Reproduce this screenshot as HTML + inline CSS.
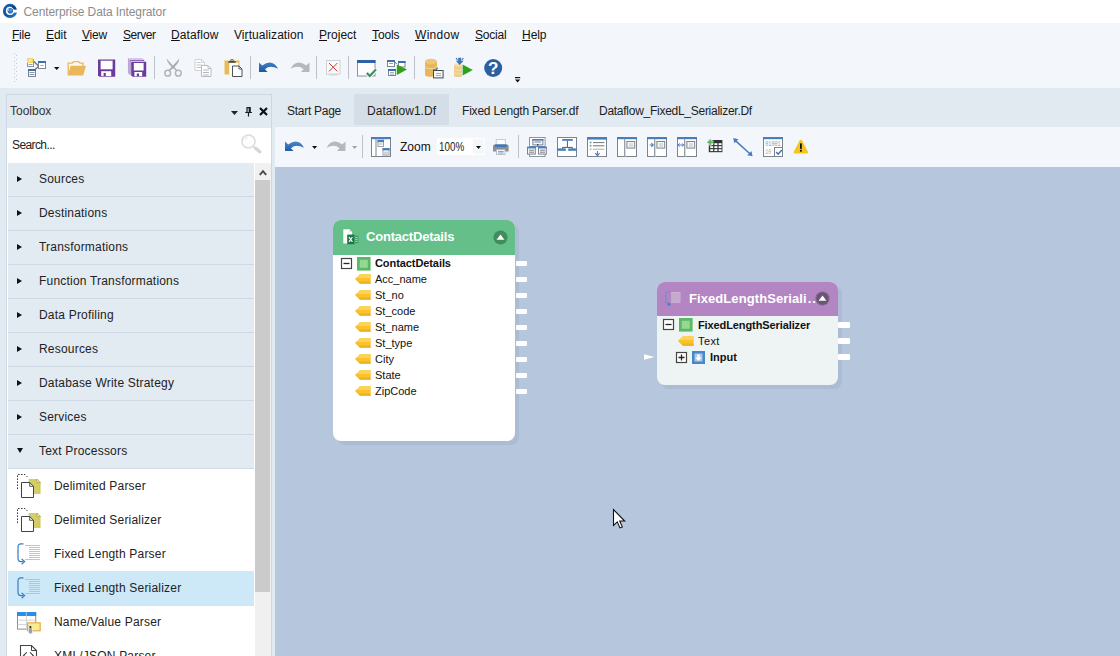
<!DOCTYPE html>
<html><head><meta charset="utf-8"><title>Centerprise Data Integrator</title>
<style>
*{box-sizing:border-box;margin:0;padding:0}
html,body{width:1120px;height:656px;overflow:hidden;background:#e1e9f1;font-family:"Liberation Sans",sans-serif;font-size:12px;color:#1e1e1e}
.abs{position:absolute}
svg{overflow:visible}
span{white-space:nowrap}
#title{left:0;top:0;width:1120px;height:23px;background:#fff}
#title .t{left:23.5px;top:5px;color:#8c8c8c;font-size:12px}
#menu{left:0;top:23px;width:1120px;height:24px;background:#f3f6fa}
#menu span{position:absolute;top:5px;font-size:12px;color:#111}
#menu u{text-decoration:underline;text-underline-offset:1px}
#tbar{left:0;top:47px;width:1120px;height:41px;background:#f3f6fa}
.sep{position:absolute;width:1px;background:#bcc1ca}
#toolbox{left:6px;top:94px;width:266px;height:570px;border:1px solid #ced8e5;background:#e1e9f1}
#tbx-t{left:10px;top:104px;font-size:12px;color:#333}
#search{left:7px;top:128px;width:264px;height:35px;background:#fff}
#search span{left:5px;top:10px;font-size:12px;color:#222}
.cat{position:absolute;left:8px;width:246px;height:34px;background:#e2eaf2;border-bottom:1px solid #cfd8e5}
.cat span{position:absolute;left:31px;top:9px;font-size:12px;color:#222;letter-spacing:0.2px}
.cat i{position:absolute;left:9px;top:12.6px;width:0;height:0;border-left:5.4px solid #111;border-top:3.9px solid transparent;border-bottom:3.9px solid transparent}
.cat i.open{left:9px;top:13px;border-left:3.7px solid transparent;border-right:3.7px solid transparent;border-top:5.4px solid #111;border-bottom:0}
.item{position:absolute;left:8px;width:247px;height:34px;background:#fff}
.item.sel{background:#cde8f7;width:246px;height:35.6px}
.item span{position:absolute;left:46px;top:10px;font-size:12px;color:#222;letter-spacing:0.2px}
#sbar{left:255px;top:163px;width:16px;height:493px;background:#f0f0f0}
#sthumb{left:255px;top:180px;width:15px;height:411.5px;background:#cbcbcb}
#tabs span{position:absolute;top:104px;font-size:12px;color:#1e1e1e}
#tabact{left:354px;top:94px;width:95px;height:31px;background:#d5dde7}
#tb2{left:275px;top:127px;width:845px;height:40px;background:#f3f6fa}
#canvas{left:275px;top:167px;width:845px;height:489px;background:#b6c7dd;overflow:hidden}
.node{position:absolute;border-radius:8px;}
.nshadow{position:absolute;border-radius:8px;background:#abbcd4}
.nhead{position:absolute;left:0;top:0;right:0;border-radius:8px 8px 0 0}
.ntitle{position:absolute;color:#fff;font-weight:bold;font-size:13px}
.row{position:absolute;font-size:11px;color:#111}
.row.b{font-weight:bold}
.port{position:absolute;width:11px;height:5px;background:#fff;border-radius:1px}
</style></head><body>
<div id="title" class="abs"><span class="abs t" style="letter-spacing:-0.107px">Centerprise Data Integrator</span>
<svg class="abs" style="left:0px;top:0px" width="20" height="22" viewBox="0 0 20 22" ><defs><linearGradient id="lg" x1="0" y1="0" x2="1" y2="1"><stop offset="0" stop-color="#1565b2"/><stop offset="0.5" stop-color="#0c4f9e"/><stop offset="1" stop-color="#1d7cc4"/></linearGradient></defs><circle cx="10" cy="10.9" r="5.6" fill="none" stroke="url(#lg)" stroke-width="3"/><path d="M12.4 5.2A6.4 6.4 0 0 1 16.6 9.2L14 9.8Q13 7.6 11.4 7z" fill="#0b3f8a"/><rect x="12.8" y="9.7" width="5.4" height="2.9" fill="#fff"/><circle cx="10.3" cy="10.7" r="2.8" fill="#2a6fc0"/><circle cx="10.9" cy="10.2" r="1.2" fill="#4a9be0"/><circle cx="8.6" cy="10" r="0.9" fill="#9fb6d4"/></svg>
</div>
<div id="menu" class="abs"><span style="left:12px;letter-spacing:-0.225px"><u>F</u>ile</span><span style="left:46px;letter-spacing:-0.05px"><u>E</u>dit</span><span style="left:82px;letter-spacing:-0.2px"><u>V</u>iew</span><span style="left:123px;letter-spacing:-0.483px"><u>S</u>erver</span><span style="left:171px;letter-spacing:0.1px"><u>D</u>ataflow</span><span style="left:234px;letter-spacing:0.071px">Vi<u>r</u>tualization</span><span style="left:319px;letter-spacing:0.014px"><u>P</u>roject</span><span style="left:372px;letter-spacing:-0.1px"><u>T</u>ools</span><span style="left:415px;letter-spacing:0.3px"><u>W</u>indow</span><span style="left:475px;letter-spacing:-0.2px"><u>S</u>ocial</span><span style="left:522px;letter-spacing:-0.05px"><u>H</u>elp</span></div>
<div id="tbar" class="abs"></div>
<svg class="abs" style="left:14px;top:53px" width="4" height="30" viewBox="0 0 4 30" ><rect x="0" y="0" width="1" height="1" fill="#c3c8d0"/><rect x="2" y="2" width="1" height="1" fill="#c3c8d0"/><rect x="0" y="4" width="1" height="1" fill="#c3c8d0"/><rect x="2" y="6" width="1" height="1" fill="#c3c8d0"/><rect x="0" y="8" width="1" height="1" fill="#c3c8d0"/><rect x="2" y="10" width="1" height="1" fill="#c3c8d0"/><rect x="0" y="12" width="1" height="1" fill="#c3c8d0"/><rect x="2" y="14" width="1" height="1" fill="#c3c8d0"/><rect x="0" y="16" width="1" height="1" fill="#c3c8d0"/><rect x="2" y="18" width="1" height="1" fill="#c3c8d0"/><rect x="0" y="20" width="1" height="1" fill="#c3c8d0"/><rect x="2" y="22" width="1" height="1" fill="#c3c8d0"/><rect x="0" y="24" width="1" height="1" fill="#c3c8d0"/><rect x="2" y="26" width="1" height="1" fill="#c3c8d0"/><rect x="0" y="28" width="1" height="1" fill="#c3c8d0"/></svg>
<div class="sep" style="left:154px;top:56px;height:23px"></div>
<div class="sep" style="left:250px;top:56px;height:23px"></div>
<div class="sep" style="left:316px;top:56px;height:23px"></div>
<div class="sep" style="left:348px;top:56px;height:23px"></div>
<div class="sep" style="left:414px;top:56px;height:23px"></div>
<svg class="abs" style="left:27px;top:58px" width="19" height="19" viewBox="0 0 19 19"><path d="M7 3.5L11.5 8M8 11.5L11.5 8.5" stroke="#6b7480" stroke-width="1.2" fill="none"/><rect x="0.5" y="1.5" width="6" height="7" fill="#fff" stroke="#8a929c" stroke-width="1"/><rect x="0" y="1" width="7" height="2" fill="#8fa8c8"/><path d="M1.5 6.5h4" stroke="#9aa3ad" stroke-width="1"/><rect x="0" y="0" width="6" height="5" fill="#f6d56a"/><rect x="1.5" y="1.2" width="3" height="2.6" fill="#fbe9a6"/><rect x="11.5" y="3.5" width="7" height="7" fill="#fff" stroke="#7d8794" stroke-width="1"/><rect x="11" y="3" width="8" height="2" fill="#3b6fae"/><path d="M13.5 7.5h3" stroke="#9aa3ad" stroke-width="1"/><rect x="1.5" y="11.5" width="7" height="7" fill="#fff" stroke="#7d8794" stroke-width="1"/><rect x="1" y="11" width="8" height="2" fill="#3b6fae"/><path d="M2.5 14.5h5M2.5 16.5h5" stroke="#8a929c" stroke-width="1"/></svg>
<svg class="abs" style="left:54px;top:67px" width="6" height="3" viewBox="0 0 6 3"><path d="M0 0h5.4L2.7 3z" fill="#111"/></svg>
<svg class="abs" style="left:67px;top:60px" width="20" height="17" viewBox="0 0 20 17"><path d="M1.2 15V3.2h4.2l1.2-1.6h5.2l1.2 1.6H16V6" fill="#fff8e8" stroke="#e9b95b" stroke-width="1.3"/><path d="M3.6 5.8H19L16.2 15.6H0.8z" fill="#e9b85a"/></svg>
<svg class="abs" style="left:98px;top:59px" width="18" height="18" viewBox="0 0 18 18"><path d="M0 0.5h17.2v17.2h-15.7l-1.5 -1.5z" fill="#6a3b9c"/><rect x="2.6" y="1.7" width="12.0" height="8.6" fill="#fff"/><rect x="3.2" y="12.196" width="10.0" height="4.904" fill="#fff"/><rect x="5.6" y="13.916" width="2.2" height="3.1839999999999997" fill="#6a3b9c"/></svg>
<svg class="abs" style="left:128px;top:58px" width="19" height="19" viewBox="0 0 19 19"><path d="M0.5 15.5V1h14.2" fill="none" stroke="#b29acd" stroke-width="1.1"/><path d="M1.9 16.6V2.4h14.3" fill="none" stroke="#7d55ab" stroke-width="1.2"/><path d="M1.2 1.7h14M1.2 1.7v14" stroke="#efe8f6" stroke-width="0.6" fill="none"/><path d="M3.2 3.8h15v15h-13.5l-1.5 -1.5z" fill="#6a3b9c"/><rect x="5.800000000000001" y="5.0" width="9.8" height="7.5" fill="#fff"/><rect x="6.4" y="14.0" width="7.8" height="4.2" fill="#fff"/><rect x="8.8" y="15.5" width="2.2" height="2.6999999999999997" fill="#6a3b9c"/></svg>
<svg class="abs" style="left:164px;top:58px" width="19" height="19" viewBox="0 0 19 19"><circle cx="3.7" cy="15.2" r="2.9" fill="none" stroke="#b3b5b8" stroke-width="1.5"/><circle cx="14.3" cy="15.2" r="2.9" fill="none" stroke="#b3b5b8" stroke-width="1.5"/><path d="M2.6 0.6Q3 5 8 9.5L12.6 13.2 13.6 12.2 9.4 8Q5 3.4 2.6 0.6z" fill="#b3b5b8"/><path d="M15.4 0.6Q15 5 10 9.5L5.4 13.2 4.4 12.2 8.6 8Q13 3.4 15.4 0.6z" fill="#a9abae"/></svg>
<svg class="abs" style="left:194px;top:59px" width="18" height="18" viewBox="0 0 18 18"><path d="M1.0 0.5h6.5l3 3v8h-9.5z" fill="#fff" stroke="#d0d2d5" stroke-width="1"/><path d="M7.5 0.5v3h3" fill="none" stroke="#d0d2d5" stroke-width="0.9"/><path d="M2.5 3.5h4M2.5 6h6M2.5 8.5h5" stroke="#c4c6c9" stroke-width="1"/><path d="M7.5 6.5h6.5l3 3v8h-9.5z" fill="#fff" stroke="#b9bcc0" stroke-width="1"/><path d="M14.0 6.5v3h3" fill="none" stroke="#b9bcc0" stroke-width="0.9"/><path d="M9 11h6M9 13.5h6M9 16h6" stroke="#b4b7ba" stroke-width="1"/></svg>
<svg class="abs" style="left:224px;top:58px" width="19" height="19" viewBox="0 0 19 19"><rect x="0.5" y="2.5" width="15" height="14" fill="#e9b95b"/><rect x="5.2" y="4.6" width="9.2" height="11.9" fill="#fffdf8"/><path d="M0.5 2.5v14" stroke="#f6dda6" stroke-width="1" stroke-dasharray="1 1"/><path d="M4.4 4.8V3.2h2V2Q8 0 9.6 2v1.2h2.2v1.6z" fill="#3e4347"/><rect x="7.2" y="1.8" width="1.6" height="1" fill="#f3f6fa"/><path d="M8.5 8.0h6.5l3 3v7.5h-9.5z" fill="#fff" stroke="#4d5359" stroke-width="1"/><path d="M15.0 8.0v3h3" fill="none" stroke="#4d5359" stroke-width="0.9"/></svg>
<svg class="abs" style="left:259px;top:61px" width="20" height="12" viewBox="0 0 20 12"><defs><linearGradient id="ug" x1="0" y1="0" x2="0" y2="1"><stop offset="0" stop-color="#3f7fc6"/><stop offset="1" stop-color="#1f56a0"/></linearGradient></defs><path d="M0 1.4V11h8.6L5.9 8.2Q11 3.6 19 7.8Q13.4 -2.6 3.2 4.4z" fill="url(#ug)"/></svg>
<svg class="abs" style="left:290px;top:61px" width="20" height="12" viewBox="0 0 20 12"><g transform="translate(19.5,0) scale(-1,1)"><path d="M0 1.4V11h8.6L5.9 8.2Q11 3.6 19 7.8Q13.4 -2.6 3.2 4.4z" fill="#b6b8bb"/></g></svg>
<svg class="abs" style="left:326px;top:60px" width="15" height="16" viewBox="0 0 15 16"><path d="M3 14.8h9" stroke="#d9dbde" stroke-width="1.4"/><rect x="0.5" y="0.5" width="13.5" height="13.5" fill="#fbfbfc" stroke="#cfd1d4" stroke-width="1"/><path d="M3 3l8.4 8.4M11.4 3L3 11.4" stroke="#c8302e" stroke-width="0.95"/></svg>
<svg class="abs" style="left:357px;top:60px" width="20" height="18" viewBox="0 0 20 18"><rect x="0.5" y="0.5" width="17.5" height="15.5" fill="#fdfdfd" stroke="#8d949c" stroke-width="1"/><rect x="0" y="0" width="18.5" height="3" fill="#2e61a8"/><path d="M9.6 13l3 3.2 6.4-6.8" fill="none" stroke="#f3f6fa" stroke-width="4"/><path d="M9.8 13l3 3 6.2-6.6" fill="none" stroke="#3b8c55" stroke-width="2.1"/></svg>
<svg class="abs" style="left:387px;top:59px" width="21" height="18" viewBox="0 0 21 18"><rect x="0.5" y="1.5" width="7" height="6" fill="#fff" stroke="#7d8794" stroke-width="1"/><rect x="0" y="1" width="8" height="2" fill="#3b6fae"/><path d="M2 4.5h4" stroke="#9aa3ad" stroke-width="1"/><path d="M8 3l1.6 2" stroke="#6b7480" stroke-width="1"/><rect x="11.5" y="2.5" width="6.5" height="5.5" fill="#fff" stroke="#7d8794" stroke-width="1"/><rect x="11" y="2" width="7.5" height="2" fill="#3b6fae"/><rect x="1.5" y="10.5" width="7" height="6" fill="#fff" stroke="#7d8794" stroke-width="1"/><rect x="1" y="10" width="8" height="2" fill="#3b6fae"/><path d="M3 13.5h4M3 15.2h4" stroke="#9aa3ad" stroke-width="0.9"/><path d="M9.8 5.4L20 10.6 9.8 16z" fill="#2ea319"/></svg>
<svg class="abs" style="left:424px;top:58px" width="20" height="21" viewBox="0 0 20 21"><path d="M1 3.6v12.6Q1 18.8 7 18.8T13 16.2V3.6z" fill="#e5b65b"/><ellipse cx="7" cy="3.6" rx="6" ry="2.8" fill="#ecc679"/><path d="M1 8.2Q1 10.6 7 10.6T13 8.2" fill="none" stroke="#f4dca8" stroke-width="0.9"/><path d="M9.4 11.2l1.6 1.6 2.8-3" fill="none" stroke="#4a8f5c" stroke-width="1.4"/><rect x="9.5" y="12.5" width="9.6" height="7.4" fill="#f3f5f8" stroke="#454b52" stroke-width="1"/><path d="M12 15.5h5M12 17.5h5" stroke="#a9afb6" stroke-width="1"/></svg>
<svg class="abs" style="left:453px;top:57px" width="21" height="21" viewBox="0 0 21 21"><path d="M1 8v10.4Q1 20 5 20T9 18.4V8z" fill="#f0cc8a"/><ellipse cx="5" cy="8" rx="4" ry="1.8" fill="#f5dcae"/><path d="M1.2 12.5Q5 14.5 9 12.5M1.2 16Q5 18 9 16" stroke="#f7e5c2" stroke-width="0.8" fill="none"/><path d="M5.2 0.8h3v3h2.4L6.7 8 2.8 3.8h2.4z" fill="#3b74ba"/><path d="M3 1.2l1.6 1.8M10.4 1.2L8.8 3" stroke="#3b74ba" stroke-width="1.1"/><path d="M9.6 7.6L19.8 13 9.6 18.6z" fill="#2ea319"/></svg>
<svg class="abs" style="left:484px;top:59px" width="19" height="19" viewBox="0 0 19 19"><circle cx="9.2" cy="9" r="9" fill="#2b5fa0"/><text x="9.2" y="15.1" text-anchor="middle" font-family="Liberation Sans, sans-serif" font-weight="bold" font-size="17" fill="#fff">?</text></svg>
<svg class="abs" style="left:515px;top:77px" width="6" height="6" viewBox="0 0 6 6"><rect x="0" y="0" width="5.2" height="1.2" fill="#111"/><path d="M0 2.6h5.2L2.6 5.6z" fill="#111"/></svg>
<div id="toolbox" class="abs"></div>
<span id="tbx-t" class="abs">Toolbox</span>
<svg class="abs" style="left:231px;top:111px" width="8" height="5" viewBox="0 0 8 5" ><path d="M0 0h7l-3.5 4z" fill="#222"/></svg>
<svg class="abs" style="left:245px;top:106.5px" width="7" height="10" viewBox="0 0 7 10" ><path d="M1.5 0.6h4.2M2 0.5v5M5.2 0.5v5M4.3 0.5v5M0.3 5.5h6.6M3.5 5.5v4" stroke="#1a1a1a" stroke-width="1.2" fill="none"/></svg>
<svg class="abs" style="left:258.5px;top:107px" width="9" height="9" viewBox="0 0 9 9" ><path d="M1 1l7 7M8 1l-7 7" stroke="#111" stroke-width="2.2" fill="none"/></svg>
<div class="abs" style="left:7px;top:128px;width:248px;height:528px;background:#fff"></div>
<div id="search" class="abs"><span class="abs" style="letter-spacing:-0.6px">Search...</span></div>
<svg class="abs" style="left:240px;top:132.5px" width="22" height="22" viewBox="0 0 22 22" ><circle cx="8.5" cy="8.5" r="6.5" fill="none" stroke="#dcdcdc" stroke-width="1.6"/><path d="M13.2 13.2l2 2" stroke="#dcdcdc" stroke-width="1.6"/><path d="M15.6 15.2l4.2 3.6" stroke="#d6d6d6" stroke-width="3.4" stroke-linecap="round"/><path d="M5 7a4 4 0 0 1 3-3" stroke="#e6e6e6" stroke-width="1" fill="none"/></svg>
<div class="cat" style="top:163px"><i></i><span>Sources</span></div>
<div class="cat" style="top:197px"><i></i><span>Destinations</span></div>
<div class="cat" style="top:231px"><i></i><span>Transformations</span></div>
<div class="cat" style="top:265px"><i></i><span>Function Transformations</span></div>
<div class="cat" style="top:299px"><i></i><span>Data Profiling</span></div>
<div class="cat" style="top:333px"><i></i><span>Resources</span></div>
<div class="cat" style="top:367px"><i></i><span>Database Write Strategy</span></div>
<div class="cat" style="top:401px"><i></i><span>Services</span></div>
<div class="cat" style="top:435px"><i class="open"></i><span>Text Processors</span></div>
<div class="item" style="top:469px"><span>Delimited Parser</span></div>
<div class="item" style="top:503px"><span>Delimited Serializer</span></div>
<div class="item" style="top:537px"><span>Fixed Length Parser</span></div>
<div class="item sel" style="top:571px"><span>Fixed Length Serializer</span></div>
<div class="item" style="top:605.6px;height:33.4px"><span style="top:9.4px">Name/Value Parser</span></div>
<div class="item" style="top:639px"><span>XML/JSON Parser</span></div>
<svg class="abs" style="left:17px;top:474px" width="25" height="25" viewBox="0 0 25 25"><path d="M0.5 15V0.5H8L11.5 4" fill="none" stroke="#3a3f45" stroke-width="1" stroke-dasharray="1.6 1.4"/><path d="M11.6 5h8.4l3.6 3.6V20H11.6z" fill="#d3ce68"/><path d="M20 5v3.6h3.6z" fill="#f2efb8" stroke="#9a9648" stroke-width="0.6"/><path d="M22.4 11v8" stroke="#bcb85a" stroke-width="0.8" stroke-dasharray="1 1.2"/><path d="M4.5 8.5h8.2l3.8 3.8V23.5H4.5z" fill="#fff" stroke="#3f444a" stroke-width="1"/><path d="M12.7 8.5v3.8h3.8" fill="none" stroke="#3f444a" stroke-width="0.9"/></svg>
<svg class="abs" style="left:17px;top:508px" width="25" height="25" viewBox="0 0 25 25"><path d="M0.5 15V0.5H8L11.5 4" fill="none" stroke="#3a3f45" stroke-width="1" stroke-dasharray="1.6 1.4"/><path d="M11.6 5h8.4l3.6 3.6V20H11.6z" fill="#d3ce68"/><path d="M20 5v3.6h3.6z" fill="#f2efb8" stroke="#9a9648" stroke-width="0.6"/><path d="M22.4 11v8" stroke="#bcb85a" stroke-width="0.8" stroke-dasharray="1 1.2"/><path d="M4.5 8.5h8.2l3.8 3.8V23.5H4.5z" fill="#fff" stroke="#3f444a" stroke-width="1"/><path d="M12.7 8.5v3.8h3.8" fill="none" stroke="#3f444a" stroke-width="0.9"/></svg>
<svg class="abs" style="left:17px;top:543px" width="25" height="23" viewBox="0 0 25 23"><path d="M6.5 0.8H4Q1 0.8 1 3.8V15Q1 18.6 4 18.6h2.4" fill="none" stroke="#3a7bc4" stroke-width="1.2"/><path d="M4.6 16l3 2.6-3 2.6" fill="none" stroke="#3a7bc4" stroke-width="1.2"/><path d="M8 2.5H23" stroke="#b9bdc2" stroke-width="0.9"/><path d="M12 4.5H23" stroke="#b9bdc2" stroke-width="0.9"/><path d="M12 6.5H23" stroke="#b9bdc2" stroke-width="0.9"/><path d="M12 8.5H23" stroke="#b9bdc2" stroke-width="0.9"/><path d="M12 10.5H23" stroke="#b9bdc2" stroke-width="0.9"/><path d="M12 12.5H23" stroke="#b9bdc2" stroke-width="0.9"/><path d="M12 14.5H23" stroke="#b9bdc2" stroke-width="0.9"/><path d="M8 16.5H23" stroke="#b9bdc2" stroke-width="0.9"/></svg>
<svg class="abs" style="left:17px;top:577px" width="25" height="23" viewBox="0 0 25 23"><path d="M6.5 0.8H4Q1 0.8 1 3.8V15Q1 18.6 4 18.6h2.4" fill="none" stroke="#3a7bc4" stroke-width="1.2"/><path d="M4.6 16l3 2.6-3 2.6" fill="none" stroke="#3a7bc4" stroke-width="1.2"/><path d="M8 2.5H23" stroke="#b9bdc2" stroke-width="0.9"/><path d="M12 4.5H23" stroke="#b9bdc2" stroke-width="0.9"/><path d="M12 6.5H23" stroke="#b9bdc2" stroke-width="0.9"/><path d="M12 8.5H23" stroke="#b9bdc2" stroke-width="0.9"/><path d="M12 10.5H23" stroke="#b9bdc2" stroke-width="0.9"/><path d="M12 12.5H23" stroke="#b9bdc2" stroke-width="0.9"/><path d="M12 14.5H23" stroke="#b9bdc2" stroke-width="0.9"/><path d="M8 16.5H23" stroke="#b9bdc2" stroke-width="0.9"/></svg>
<svg class="abs" style="left:17px;top:611.5px" width="25" height="23" viewBox="0 0 25 23"><rect x="0.5" y="0.5" width="18.2" height="16.6" fill="#fff" stroke="#8a9097" stroke-width="1"/><rect x="0" y="0" width="19.2" height="4" fill="#2a8fe0"/><path d="M9.4 0V17M0.5 8.2H18.5M0.5 12.6H18.5" stroke="#d0d4d9" stroke-width="1"/><path d="M9.4 0v4" stroke="#7dbdf0" stroke-width="1"/><rect x="10.6" y="10.8" width="12.6" height="8" fill="#f7ec92" stroke="#e9a63c" stroke-width="1.1"/><path d="M12 14.4Q13.4 12.6 14.6 14.6L15.6 19Q15.6 22 13.6 22Q11.6 22 11.4 19.4z" fill="#9a9da1" stroke="#eceef0" stroke-width="0.8"/><rect x="12.6" y="14" width="1.6" height="2" fill="#333"/></svg>
<svg class="abs" style="left:20px;top:645px" width="18" height="12" viewBox="0 0 18 12"><path d="M0.5 12V0.5H11.5L16.5 5.5V12" fill="#fff" stroke="#3f444a" stroke-width="1.1"/><path d="M11.5 0.5V5.5H16.5" fill="none" stroke="#3f444a" stroke-width="1"/><path d="M6.8 7.4L3.6 10.4l1 1M10 7.4l3.2 3-1 1" fill="none" stroke="#3f444a" stroke-width="1.2"/></svg>
<div class="abs" style="left:254px;top:163px;width:1px;height:493px;background:#fff"></div><div id="sbar" class="abs"></div><div id="sthumb" class="abs"></div>
<svg class="abs" style="left:258.5px;top:168.5px" width="8" height="7" viewBox="0 0 8 7" ><path d="M0.8 5.8l3.2-3.6L7.2 5.8" stroke="#4a4a4a" stroke-width="2" fill="none"/></svg>
<div id="tabact" class="abs"></div>
<div id="tabs"><span style="left:287px;letter-spacing:-0.27px">Start Page</span><span style="left:367px;letter-spacing:0.025px">Dataflow1.Df</span><span style="left:462px;letter-spacing:-0.2px">Fixed Length Parser.df</span><span style="left:599px;letter-spacing:-0.269px">Dataflow_FixedL_Serializer.Df</span></div>
<div id="tb2" class="abs"></div>
<div class="sep" style="left:362px;top:135px;height:23px"></div>
<div class="sep" style="left:518px;top:135px;height:23px"></div>
<svg class="abs" style="left:285px;top:140px" width="20" height="12" viewBox="0 0 20 12"><defs><linearGradient id="ug2" x1="0" y1="0" x2="0" y2="1"><stop offset="0" stop-color="#4a86c8"/><stop offset="1" stop-color="#245ba4"/></linearGradient></defs><path d="M0 1.4V11h8.6L5.9 8.2Q11 3.6 19 7.8Q13.4 -2.6 3.2 4.4z" fill="url(#ug2)"/></svg>
<svg class="abs" style="left:312px;top:146px" width="6" height="3" viewBox="0 0 6 3"><path d="M0 0h5.2L2.6 3z" fill="#111"/></svg>
<svg class="abs" style="left:326px;top:140px" width="20" height="12" viewBox="0 0 20 12"><g transform="translate(19.5,0) scale(-1,1)"><path d="M0 1.4V11h8.6L5.9 8.2Q11 3.6 19 7.8Q13.4 -2.6 3.2 4.4z" fill="#b6b8bb"/></g></svg>
<svg class="abs" style="left:352px;top:146px" width="6" height="3" viewBox="0 0 6 3"><path d="M0 0h5.2L2.6 3z" fill="#a3a5a8"/></svg>
<svg class="abs" style="left:371px;top:137px" width="20" height="20" viewBox="0 0 20 20"><rect x="0.5" y="0.5" width="19" height="19" fill="#fff" stroke="#7c838c" stroke-width="1"/><rect x="0" y="0" width="20" height="2.2" fill="#4a7dbb"/><path d="M5 2v17.5" stroke="#7c838c" stroke-width="1"/><rect x="7.0" y="3.3" width="5.5" height="6.2" fill="#fff" stroke="#9aa1a9" stroke-width="1"/><rect x="6.5" y="2.8" width="6.5" height="2.4" fill="#4a7dbb"/><path d="M8 7h3.5" stroke="#aab0b7" stroke-width="1"/><rect x="12.0" y="11.5" width="6" height="6.6" fill="#fff" stroke="#9aa1a9" stroke-width="1"/><rect x="11.5" y="11" width="7" height="2.4" fill="#4a7dbb"/><path d="M13 15.2h4M13 16.8h4" stroke="#aab0b7" stroke-width="0.8"/></svg>
<span class="abs" style="left:400px;top:140px;font-size:12px;color:#111" id="zoomlbl">Zoom</span>
<div class="abs" style="left:437px;top:138px;width:48px;height:17px;background:#fff"></div><div class="abs" style="left:473px;top:139px;width:11px;height:15px;background:#f6f7fa"></div>
<span class="abs" style="left:439px;top:140px;font-size:12px;color:#222;transform:scaleX(0.82);transform-origin:0 0" id="zoomval">100%</span>
<svg class="abs" style="left:476px;top:146px" width="6" height="3" viewBox="0 0 6 3"><path d="M0 0h5L2.5 3z" fill="#111"/></svg>
<svg class="abs" style="left:492px;top:139px" width="18" height="16" viewBox="0 0 18 16"><rect x="4.2" y="0.5" width="9.2" height="6" fill="#fdfdfd" stroke="#c9ccd1" stroke-width="1"/><path d="M1 7.2Q1 5.6 2.6 5.6h12.4Q16.6 5.6 16.6 7.2V12.6H1z" fill="#8b9097"/><rect x="3" y="5.4" width="11.6" height="2.6" fill="#3f79ba"/><rect x="4.6" y="10.4" width="8.4" height="5.2" fill="#fdfdfd" stroke="#aeb3b9" stroke-width="0.8"/><path d="M6 12.4h5.6M6 14h5.6" stroke="#5a8fcb" stroke-width="0.9"/></svg>
<svg class="abs" style="left:527px;top:137px" width="20" height="20" viewBox="0 0 20 20"><rect x="2.5" y="0.5" width="15.6" height="19" fill="#fff" stroke="#8e959d" stroke-width="1"/><path d="M3 9.6h15" stroke="#4a7dbb" stroke-width="1"/><rect x="5.9" y="2.5" width="10" height="5.4" fill="#f4f5f7" stroke="#7c838c" stroke-width="1"/><rect x="5.4" y="2" width="11" height="1.6" fill="#4a7dbb"/><path d="M7.5 5h6.6" stroke="#7c838c" stroke-width="1"/><rect x="10" y="7.2" width="1.4" height="1.4" fill="#333"/><rect x="0.5" y="10.3" width="7.800000000000001" height="6.8" fill="#f4f5f7" stroke="#7c838c" stroke-width="1"/><rect x="0" y="9.8" width="8.8" height="1.6" fill="#4a7dbb"/><path d="M2 13.2h5M2 15.2h5" stroke="#7c838c" stroke-width="1"/><rect x="11.5" y="10.3" width="7.800000000000001" height="6.8" fill="#f4f5f7" stroke="#7c838c" stroke-width="1"/><rect x="11" y="9.8" width="8.8" height="1.6" fill="#4a7dbb"/><path d="M13 13.2h5M13 15.2h5" stroke="#7c838c" stroke-width="1"/></svg>
<svg class="abs" style="left:557px;top:137px" width="20" height="20" viewBox="0 0 20 20"><rect x="0.5" y="0.5" width="19" height="19" fill="#fff" stroke="#7c838c" stroke-width="1"/><rect x="5.2" y="2" width="10.6" height="1.8" fill="#4a7dbb"/><path d="M10.4 3.8V10.4M5.6 12V10.4H15.4V12" fill="none" stroke="#555c64" stroke-width="1"/><rect x="0" y="11.4" width="8.8" height="2.4" fill="#4a7dbb"/><rect x="11.2" y="11.4" width="8.8" height="2.4" fill="#4a7dbb"/></svg>
<svg class="abs" style="left:587px;top:137px" width="20" height="20" viewBox="0 0 20 20"><rect x="0.5" y="0.5" width="19" height="19" fill="#fff" stroke="#7c838c" stroke-width="1"/><rect x="0" y="0" width="20" height="2.6" fill="#4a7dbb"/><path d="M6 5.6h11.4M6 8.8h11.4" stroke="#6d747c" stroke-width="1"/><path d="M6 12.2h11.4" stroke="#a9aeb5" stroke-width="1"/><circle cx="3.6" cy="5.6" r="1" fill="#8e959d"/><circle cx="3.6" cy="8.8" r="1" fill="#8e959d"/><circle cx="3.6" cy="12.2" r="1" fill="#b9bec4"/><path d="M10.4 14v4.4M8.2 16.2l2.2 2.4 2.2-2.4" fill="none" stroke="#4a7dbb" stroke-width="1.1"/></svg>
<svg class="abs" style="left:617px;top:137px" width="20" height="20" viewBox="0 0 20 20"><rect x="0.5" y="0.5" width="19" height="19" fill="#fff" stroke="#7c838c" stroke-width="1"/><rect x="0" y="0" width="20" height="2.2" fill="#4a7dbb"/><path d="M7.6 2.2v17.3" stroke="#8e959d" stroke-width="1"/><path d="M8.6 2.2v17.3" stroke="#d5d8dc" stroke-width="1"/><rect x="9.9" y="4.5" width="7.8" height="6.6" fill="#f4f5f7" stroke="#7c838c" stroke-width="1"/><path d="M12 7h4M12 9h4" stroke="#b2b7bd" stroke-width="0.8"/></svg>
<svg class="abs" style="left:647px;top:137px" width="20" height="20" viewBox="0 0 20 20"><rect x="0.5" y="0.5" width="19" height="19" fill="#fff" stroke="#7c838c" stroke-width="1"/><rect x="0" y="0" width="20" height="2.2" fill="#4a7dbb"/><path d="M7.6 2.2v17.3" stroke="#8e959d" stroke-width="1"/><path d="M8.6 2.2v17.3" stroke="#d5d8dc" stroke-width="1"/><rect x="9.9" y="4.5" width="7.8" height="6.6" fill="#f4f5f7" stroke="#7c838c" stroke-width="1"/><path d="M12 7h4M12 9h4" stroke="#b2b7bd" stroke-width="0.8"/><path d="M2.6 8h3.2M4.4 6.2L6.2 8 4.4 9.8" fill="none" stroke="#4a7dbb" stroke-width="1.1"/></svg>
<svg class="abs" style="left:677px;top:137px" width="20" height="20" viewBox="0 0 20 20"><rect x="0.5" y="0.5" width="19" height="19" fill="#fff" stroke="#7c838c" stroke-width="1"/><rect x="0" y="0" width="20" height="2.2" fill="#4a7dbb"/><path d="M7.6 2.2v17.3" stroke="#8e959d" stroke-width="1"/><path d="M8.6 2.2v17.3" stroke="#d5d8dc" stroke-width="1"/><rect x="9.9" y="4.5" width="7.8" height="6.6" fill="#f4f5f7" stroke="#7c838c" stroke-width="1"/><path d="M12 7h4M12 9h4" stroke="#b2b7bd" stroke-width="0.8"/><path d="M1.2 8h5.4M2.6 6.4L1 8l1.6 1.6M5.2 6.4L6.8 8 5.2 9.6" fill="none" stroke="#4a7dbb" stroke-width="1"/></svg>
<svg class="abs" style="left:707px;top:139px" width="16" height="14" viewBox="0 0 16 14"><rect x="1.8" y="1" width="13.6" height="12.2" fill="#2f3338"/><rect x="3.2" y="4.2" width="3" height="1.9" fill="#fff"/><rect x="7.4" y="4.2" width="3" height="1.9" fill="#fff"/><rect x="11.600000000000001" y="4.2" width="3" height="1.9" fill="#fff"/><rect x="3.2" y="7.2" width="3" height="1.9" fill="#fff"/><rect x="7.4" y="7.2" width="3" height="1.9" fill="#fff"/><rect x="11.600000000000001" y="7.2" width="3" height="1.9" fill="#fff"/><rect x="3.2" y="10.2" width="3" height="1.9" fill="#fff"/><rect x="7.4" y="10.2" width="3" height="1.9" fill="#fff"/><rect x="11.600000000000001" y="10.2" width="3" height="1.9" fill="#fff"/><path d="M3.2 0v6.4M0 3.2h6.4" stroke="#f3f6fa" stroke-width="3.2"/><path d="M3.2 0.4v5.6M0.4 3.2h5.6" stroke="#5cb85c" stroke-width="2"/></svg>
<svg class="abs" style="left:733px;top:138px" width="20" height="19" viewBox="0 0 20 19"><path d="M2.4 2.6L17.2 16" stroke="#4a7dbb" stroke-width="1.5"/><path d="M0.2 0l5.2 1.2-4 4z" fill="#4a7dbb"/><path d="M19.6 18.2l-5.4-1 4.2-4.2z" fill="#4a7dbb"/></svg>
<svg class="abs" style="left:763px;top:137px" width="20" height="20" viewBox="0 0 20 20"><rect x="0.5" y="0.5" width="19" height="19" fill="#fff" stroke="#7c838c" stroke-width="1"/><rect x="0" y="0" width="20" height="2.2" fill="#4a7dbb"/><text x="2.2" y="9.4" font-family="Liberation Mono, monospace" font-size="6.4" fill="#8e959d" textLength="15.5" lengthAdjust="spacingAndGlyphs">01001</text><text x="2.2" y="17" font-family="Liberation Mono, monospace" font-size="6.4" fill="#a2a8af" textLength="6" lengthAdjust="spacingAndGlyphs">10</text><rect x="11.5" y="10.5" width="8" height="9" fill="#fff" stroke="#7c838c" stroke-width="1"/><path d="M13.2 15l2 2.2 3.6-4.2" fill="none" stroke="#3d73b6" stroke-width="1.5"/></svg>
<svg class="abs" style="left:793px;top:139px" width="16" height="15" viewBox="0 0 16 15"><path d="M7.8 0.8Q8.6 0.8 9 1.6L15 13Q15.4 14.4 14 14.4H1.6Q0.2 14.4 0.7 13L6.6 1.6Q7 0.8 7.8 0.8z" fill="#f6c51c"/><rect x="7" y="4.4" width="1.8" height="5.4" fill="#111"/><rect x="7" y="10.8" width="1.8" height="1.8" fill="#111"/></svg>
<div id="canvas" class="abs"></div>
<div class="nshadow" style="left:337.4px;top:224px;width:181.3px;height:220.7px"></div>
<div class="node" style="left:333.3px;top:220px;width:181.3px;height:221px;background:#fff"><div class="nhead" style="height:35px;background:#65bf88"></div></div>
<svg class="abs" style="left:342.5px;top:229px" width="16" height="16" viewBox="0 0 16 16"><path d="M0.3 0.3h6.2l2.6 2.6v11.6h-8.8z" fill="#fbfdfb"/><path d="M6.5 0.3v2.6h2.6z" fill="#cfe5d6"/><rect x="4.2" y="5.6" width="7.2" height="9.6" fill="#1f7446"/><rect x="11.4" y="6.6" width="4" height="7.6" fill="#3f9c66"/><path d="M6 8l3.4 4.8M9.4 8L6 12.8" stroke="#fff" stroke-width="1.2"/><path d="M12.2 8.5h2.4M12.2 10.4h2.4M12.2 12.3h2.4" stroke="#a9dcbd" stroke-width="0.9"/></svg>
<span class="ntitle" style="left:366px;top:229.4px;letter-spacing:-0.2px">ContactDetails</span>
<svg class="abs" style="left:492.5px;top:229.5px" width="15" height="15" viewBox="0 0 15 15"><circle cx="7.5" cy="7.5" r="7" fill="#3f8c5f"/><path d="M3.6 9.8L7.5 4.6l3.9 5.2z" fill="#fff"/></svg>
<svg class="abs" style="left:341px;top:258px" width="11" height="11" viewBox="0 0 11 11"><rect x="0.5" y="0.5" width="10" height="10" fill="#fff" stroke="#444" stroke-width="1.2"/><path d="M2.5 5.5h6" stroke="#222" stroke-width="1.3"/></svg>
<svg class="abs" style="left:356.5px;top:256.5px" width="13.6" height="13.6" viewBox="0 0 13.6 13.6"><rect x="0" y="0" width="13.6" height="13.6" fill="#5cb862"/><rect x="2.8" y="2.8" width="8" height="8" fill="#93d894"/></svg>
<span class="row b" style="left:375px;top:257px;letter-spacing:-0.08px">ContactDetails</span>
<svg class="abs" style="left:355px;top:274px" width="16" height="10" viewBox="0 0 16 10"><path d="M0 5L5 0.3h10.6v9.5H5z" fill="#f9c22c"/><path d="M5 0.3h10.6v3.6H1.2z" fill="#fbd25a"/><path d="M0 5L5 9.8h10.6v-2.4H2.4z" fill="#f0b21e"/></svg>
<span class="row" style="left:375px;top:273px">Acc_name</span>
<svg class="abs" style="left:355px;top:290px" width="16" height="10" viewBox="0 0 16 10"><path d="M0 5L5 0.3h10.6v9.5H5z" fill="#f9c22c"/><path d="M5 0.3h10.6v3.6H1.2z" fill="#fbd25a"/><path d="M0 5L5 9.8h10.6v-2.4H2.4z" fill="#f0b21e"/></svg>
<span class="row" style="left:375px;top:289px">St_no</span>
<svg class="abs" style="left:355px;top:306px" width="16" height="10" viewBox="0 0 16 10"><path d="M0 5L5 0.3h10.6v9.5H5z" fill="#f9c22c"/><path d="M5 0.3h10.6v3.6H1.2z" fill="#fbd25a"/><path d="M0 5L5 9.8h10.6v-2.4H2.4z" fill="#f0b21e"/></svg>
<span class="row" style="left:375px;top:305px">St_code</span>
<svg class="abs" style="left:355px;top:322px" width="16" height="10" viewBox="0 0 16 10"><path d="M0 5L5 0.3h10.6v9.5H5z" fill="#f9c22c"/><path d="M5 0.3h10.6v3.6H1.2z" fill="#fbd25a"/><path d="M0 5L5 9.8h10.6v-2.4H2.4z" fill="#f0b21e"/></svg>
<span class="row" style="left:375px;top:321px">St_name</span>
<svg class="abs" style="left:355px;top:338px" width="16" height="10" viewBox="0 0 16 10"><path d="M0 5L5 0.3h10.6v9.5H5z" fill="#f9c22c"/><path d="M5 0.3h10.6v3.6H1.2z" fill="#fbd25a"/><path d="M0 5L5 9.8h10.6v-2.4H2.4z" fill="#f0b21e"/></svg>
<span class="row" style="left:375px;top:337px">St_type</span>
<svg class="abs" style="left:355px;top:354px" width="16" height="10" viewBox="0 0 16 10"><path d="M0 5L5 0.3h10.6v9.5H5z" fill="#f9c22c"/><path d="M5 0.3h10.6v3.6H1.2z" fill="#fbd25a"/><path d="M0 5L5 9.8h10.6v-2.4H2.4z" fill="#f0b21e"/></svg>
<span class="row" style="left:375px;top:353px">City</span>
<svg class="abs" style="left:355px;top:370px" width="16" height="10" viewBox="0 0 16 10"><path d="M0 5L5 0.3h10.6v9.5H5z" fill="#f9c22c"/><path d="M5 0.3h10.6v3.6H1.2z" fill="#fbd25a"/><path d="M0 5L5 9.8h10.6v-2.4H2.4z" fill="#f0b21e"/></svg>
<span class="row" style="left:375px;top:369px">State</span>
<svg class="abs" style="left:355px;top:386px" width="16" height="10" viewBox="0 0 16 10"><path d="M0 5L5 0.3h10.6v9.5H5z" fill="#f9c22c"/><path d="M5 0.3h10.6v3.6H1.2z" fill="#fbd25a"/><path d="M0 5L5 9.8h10.6v-2.4H2.4z" fill="#f0b21e"/></svg>
<span class="row" style="left:375px;top:385px">ZipCode</span>
<div class="port" style="left:515.5px;top:261px"></div>
<div class="port" style="left:515.5px;top:277px"></div>
<div class="port" style="left:515.5px;top:293px"></div>
<div class="port" style="left:515.5px;top:309px"></div>
<div class="port" style="left:515.5px;top:325px"></div>
<div class="port" style="left:515.5px;top:341px"></div>
<div class="port" style="left:515.5px;top:357px"></div>
<div class="port" style="left:515.5px;top:373px"></div>
<div class="port" style="left:515.5px;top:389px"></div>
<div class="nshadow" style="left:660.6px;top:286px;width:181.4px;height:103px"></div>
<div class="node" style="left:656.6px;top:282px;width:181.4px;height:103.4px;background:#eef4f3"><div class="nhead" style="height:34.4px;background:#b385c3"></div></div>
<svg class="abs" style="left:665px;top:291px" width="16" height="15" viewBox="0 0 16 15"><rect x="6" y="1" width="9.5" height="11" fill="#cdb3d6"/><path d="M6 3h9M6 5h9M6 7h9M6 9h9M6 11h9" stroke="#bda0c8" stroke-width="1"/><path d="M5 0.8H3.5Q1 0.8 1 3.3v7.5Q1 13.3 3.5 13.3H5" fill="none" stroke="#5b8ed0" stroke-width="1.1" stroke-dasharray="2 1"/><path d="M3.2 11.2l2.6 2.1-2.6 2.1z" fill="#3f78c4"/></svg>
<span class="ntitle" style="left:689px;top:291px;letter-spacing:0.08px">FixedLengthSeriali<span style="letter-spacing:1px;margin-left:1px">..</span></span>
<svg class="abs" style="left:815.4px;top:291.4px" width="15" height="15" viewBox="0 0 15 15"><circle cx="7.5" cy="7.5" r="7" fill="#6a5573"/><circle cx="7.5" cy="7.5" r="6.6" fill="none" stroke="#a98bb5" stroke-width="1" stroke-dasharray="1 1"/><path d="M3.6 9.8L7.5 4.6l3.9 5.2z" fill="#fff"/></svg>
<svg class="abs" style="left:663px;top:319.4px" width="11" height="11" viewBox="0 0 11 11"><rect x="0.5" y="0.5" width="10" height="10" fill="#fff" stroke="#444" stroke-width="1.2"/><path d="M2.5 5.5h6" stroke="#222" stroke-width="1.3"/></svg>
<svg class="abs" style="left:679.1px;top:318.3px" width="13.6" height="13.6" viewBox="0 0 13.6 13.6"><rect x="0" y="0" width="13.6" height="13.6" fill="#5cb862"/><rect x="2.8" y="2.8" width="8" height="8" fill="#93d894"/></svg>
<span class="row b" style="left:698px;top:319px;letter-spacing:-0.1px">FixedLengthSerializer</span>
<svg class="abs" style="left:678px;top:336px" width="16" height="10" viewBox="0 0 16 10"><path d="M0 5L5 0.3h10.6v9.5H5z" fill="#f9c22c"/><path d="M5 0.3h10.6v3.6H1.2z" fill="#fbd25a"/><path d="M0 5L5 9.8h10.6v-2.4H2.4z" fill="#f0b21e"/></svg>
<span class="row" style="left:698px;top:335px;letter-spacing:0.4px">Text</span>
<svg class="abs" style="left:676px;top:352px" width="11" height="11" viewBox="0 0 11 11"><rect x="0.5" y="0.5" width="10" height="10" fill="#fff" stroke="#444" stroke-width="1.2"/><path d="M2.5 5.5h6M5.5 2.5v6" stroke="#222" stroke-width="1.3"/></svg>
<svg class="abs" style="left:692px;top:351px" width="13" height="13" viewBox="0 0 13 13"><rect width="13" height="13" fill="#4a86c8"/><rect x="2.5" y="2.5" width="8" height="8" fill="#a9c9ea"/><path d="M5.3 3.5h2.4v3h2L6.5 10 3.3 6.5h2z" fill="#fff"/></svg>
<span class="row b" style="left:710px;top:351px">Input</span>
<div class="port" style="left:838px;top:322px;width:12px;height:6px"></div>
<div class="port" style="left:838px;top:338px;width:12px;height:6px"></div>
<div class="port" style="left:838px;top:354px;width:12px;height:6px"></div>
<svg class="abs" style="left:644px;top:354px" width="11" height="6" viewBox="0 0 11 6"><path d="M0 0.3L10.5 3 0 5.7z" fill="#fff"/></svg>
<svg class="abs" style="left:612px;top:508px" width="14" height="22" viewBox="0 0 14 22"><path d="M1.5 1.5v16l3.8-3.6 2.6 6 2.4-1-2.6-5.9h5z" fill="#fff" stroke="#111" stroke-width="1.1" stroke-linejoin="miter"/></svg>
</body></html>
